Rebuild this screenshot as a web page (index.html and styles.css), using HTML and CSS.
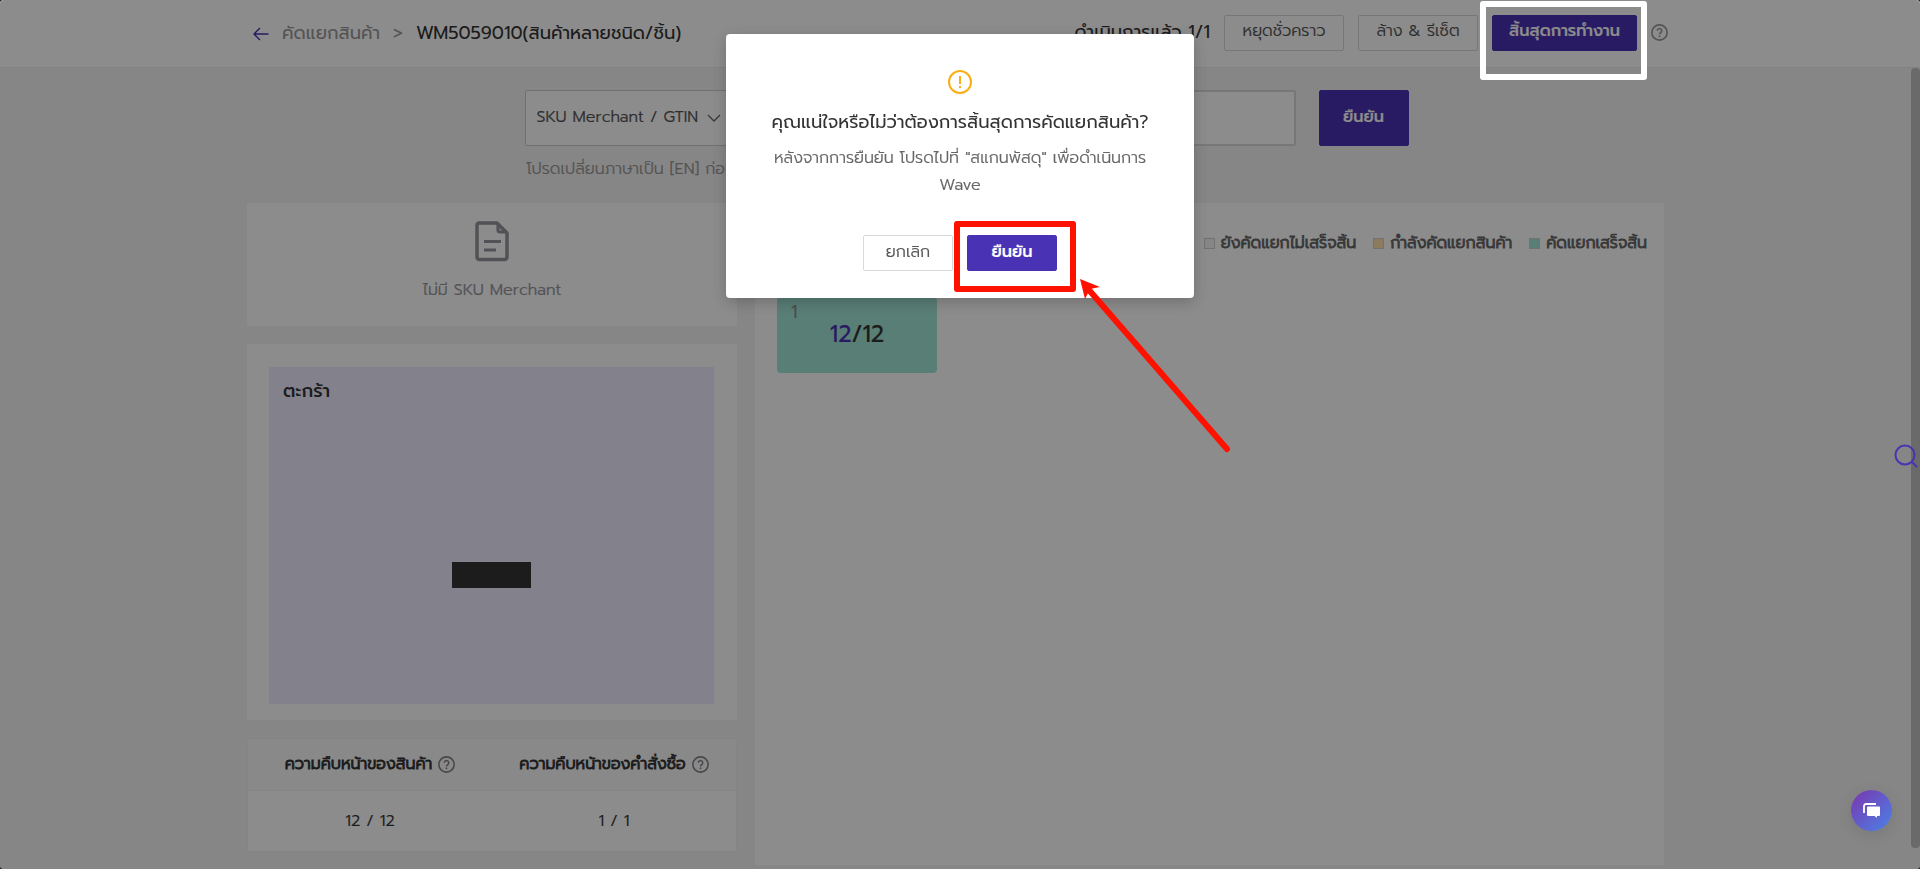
FILE: index.html
```html
<!DOCTYPE html>
<html lang="th">
<head>
  <meta charset="UTF-8">
  <title>คัดแยกสินค้า</title>
  <meta name="viewport" content="width=device-width, initial-scale=1.0">
  <link rel="stylesheet" href="styles.css">
</head>
<body>
  <svg class="defs" width="0" height="0" aria-hidden="true">
    <symbol id="icon-help" viewBox="0 0 16 16">
      <circle cx="8" cy="8" r="7.2" fill="none" stroke="currentColor" stroke-width="1.5"/>
      <path d="M5.9 6.4a2.1 2.1 0 1 1 3.2 1.8c-.7.4-1.1.8-1.1 1.5" fill="none" stroke="currentColor" stroke-width="1.5"/>
      <circle cx="8" cy="11.6" r=".9" fill="currentColor"/>
    </symbol>
  </svg>

  <div class="app">
    <header class="header">
      <div class="header-inner">
        <nav class="breadcrumb">
          <a href="#" class="back" aria-label="กลับ">
            <svg width="16" height="14" viewBox="0 0 16 14"><path d="M15.5 7H1M7 1L1 7l6 6" fill="none" stroke="currentColor" stroke-width="1.4"/></svg>
          </a>
          <a href="#" class="crumb">คัดแยกสินค้า</a>
          <span class="crumb">&gt;</span>
          <h1 class="page-title">WM5059010(สินค้าหลายชนิด/ชิ้น)</h1>
        </nav>
        <div class="actions">
          <span class="done">ดำเนินการแล้ว 1/1</span>
          <button class="btn btn-wide">หยุดชั่วคราว</button>
          <button class="btn btn-wide">ล้าง &amp; รีเซ็ต</button>
          <div class="marked">
            <button class="btn btn-primary btn-end">สิ้นสุดการทำงาน</button>
            <span class="mark mark-white"></span>
          </div>
          <svg class="help" width="17" height="17"><use href="#icon-help"/></svg>
        </div>
      </div>
    </header>

    <main class="main">
      <form class="scan">
        <div class="scan-row">
          <div class="select-wrap">
            <select class="scan-type" aria-label="ประเภท">
              <option>SKU Merchant / GTIN</option>
            </select>
            <svg class="chevron" width="14" height="8" viewBox="0 0 14 8"><path d="M1 1l6 6 6-6" fill="none" stroke="currentColor" stroke-width="1.3"/></svg>
          </div>
          <input class="scan-input" id="scan-code" type="text">
          <button type="button" class="btn btn-primary btn-scan">ยืนยัน</button>
        </div>
        <label class="hint" for="scan-code">โปรดเปลี่ยนภาษาเป็น [EN] ก่อน</label>
      </form>

      <div class="columns">
        <div class="left">
          <section class="card empty">
            <svg width="36" height="42" viewBox="0 0 36 42">
              <path d="M5 3h18l10 10v24a2.500 2.500 0 0 1-2.500 2.500h-25A2.500 2.500 0 0 1 3 37V5.500A2.500 2.500 0 0 1 5 3z" fill="none" stroke="currentColor" stroke-width="3.500" stroke-linejoin="round"/>
              <path d="M24 3v7a2 2 0 0 0 2 2h7M10 21.500h17M10 30h12" fill="none" stroke="currentColor" stroke-width="3.200"/>
            </svg>
            <p>ไม่มี SKU Merchant</p>
          </section>

          <section class="card basket-card">
            <div class="basket">
              <h2>ตะกร้า</h2>
              <div class="basket-body"><span class="basket-code"></span></div>
            </div>
          </section>

          <table class="progress">
            <thead>
              <tr>
                <th><span class="th-inner">ความคืบหน้าของสินค้า <svg width="17" height="17"><use href="#icon-help"/></svg></span></th>
                <th><span class="th-inner">ความคืบหน้าของคำสั่งซื้อ <svg width="17" height="17"><use href="#icon-help"/></svg></span></th>
              </tr>
            </thead>
            <tbody>
              <tr>
                <td>12 / 12</td>
                <td>1 / 1</td>
              </tr>
            </tbody>
          </table>
        </div>

        <section class="card right">
          <ul class="legend">
            <li><i class="dot"></i>ยังคัดแยกไม่เสร็จสิ้น</li>
            <li><i class="dot dot-doing"></i>กำลังคัดแยกสินค้า</li>
            <li><i class="dot dot-done"></i>คัดแยกเสร็จสิ้น</li>
          </ul>
          <div class="slots">
            <div class="slot">
              <span class="slot-no">1</span>
              <div class="slot-count"><span class="picked">12</span>/12</div>
            </div>
          </div>
        </section>
      </div>
    </main>

    <div class="scrollbar"></div>
    <div class="mask"></div>
  </div>

  <div class="modal" role="dialog" aria-labelledby="modal-title">
    <svg class="modal-icon" width="24" height="24" viewBox="0 0 24 24">
      <circle cx="12" cy="12" r="11" fill="none" stroke="currentColor" stroke-width="2"/>
      <path d="M12 6v8" stroke="currentColor" stroke-width="2"/>
      <circle cx="12" cy="17" r="1.200" fill="currentColor"/>
    </svg>
    <h2 id="modal-title">คุณแน่ใจหรือไม่ว่าต้องการสิ้นสุดการคัดแยกสินค้า?</h2>
    <p>หลังจากการยืนยัน โปรดไปที่ "สแกนพัสดุ" เพื่อดำเนินการ<br>Wave</p>
    <div class="modal-footer">
      <button class="btn">ยกเลิก</button>
      <div class="marked">
        <button class="btn btn-primary">ยืนยัน</button>
        <span class="mark mark-red"></span>
        <svg class="arrow" width="152" height="174" viewBox="0 0 152 174">
          <path d="M9 11L147 170" stroke="currentColor" stroke-width="6" stroke-linecap="round"/>
          <path d="M0 0l20 8-10 2-5 10z" fill="currentColor"/>
        </svg>
      </div>
    </div>
  </div>

  <button class="search-tab" aria-label="ค้นหา">
    <svg width="24" height="24" viewBox="0 0 24 24"><path d="M18 18l5 5" stroke="currentColor" stroke-width="2"/><circle cx="11" cy="11" r="9.500" fill="none" stroke="currentColor" stroke-width="2"/></svg>
  </button>

  <button class="chat" aria-label="แชท">
    <svg width="18" height="16" viewBox="0 0 18 16">
      <path d="M1 10V3a2 2 0 0 1 2-2h10" fill="none" stroke="#fff" stroke-width="1.800"/>
      <path d="M5 3.500h11a1 1 0 0 1 1 1v7.500a1 1 0 0 1-1 1h-2v2l-2.500-2H5a1 1 0 0 1-1-1V4.500a1 1 0 0 1 1-1z" fill="#fff"/>
    </svg>
  </button>
</body>
</html>
```

FILE: styles.css
```css
* {
  box-sizing: border-box;
}

body {
  margin: 0;
  background: #222;
  color: #333;
  font-family: Prompt, "Noto Sans Thai", "Noto Sans", sans-serif;
  font-size: 16px;
  font-weight: 300;
  line-height: 27px;
  -webkit-text-stroke: 0.2px;
}

h1, h2, p, ul {
  margin: 0;
  padding: 0;
}

h1, h2 {
  font-weight: 400;
  -webkit-text-stroke: 0;
}

a {
  text-decoration: none;
}

button, input, select {
  font: inherit;
}

.defs {
  position: absolute;
}

.app {
  position: relative;
  display: flex;
  flex-direction: column;
  min-height: 100vh;
  background: #f5f5f5;
  border-radius: 4px;
  overflow: hidden;
}

.header {
  background: #fff;
  border-bottom: 1px solid #ebebeb;
}

.header-inner {
  display: flex;
  justify-content: space-between;
  align-items: center;
  max-width: 1416px;
  height: 67px;
  margin: 0 auto;
  padding-left: 1px;
}

.breadcrumb {
  display: flex;
  align-items: center;
  gap: 13px;
  font-size: 18px;
  font-weight: 400;
  -webkit-text-stroke: 0;
}

.back {
  display: flex;
  color: #4a32b4;
}

.crumb {
  color: #999;
}

.page-title {
  font-size: 18px;
}

.actions {
  display: flex;
  align-items: center;
  gap: 14px;
  padding-bottom: 2px;
}

.done {
  font-size: 18px;
  font-weight: 400;
  -webkit-text-stroke: 0;
}

.help {
  color: #999;
}

.btn {
  display: block;
  min-width: 90px;
  height: 36px;
  padding: 0 12px 2px;
  color: #555;
  background: #fff;
  border: 1px solid #d9d9d9;
  border-radius: 2px;
  white-space: nowrap;
  cursor: pointer;
}

.btn-wide {
  width: 120px;
}

.btn-primary {
  color: #fff;
  background: #4a32b4;
  border-color: #4a32b4;
  font-weight: 500;
}

.btn-end {
  width: 145px;
}

.marked {
  position: relative;
}

.mark {
  position: absolute;
  z-index: 20;
  border: 6px solid #fff;
  border-radius: 3px;
  pointer-events: none;
}

.mark-white {
  inset: -14px -10px -29px -12px;
}

.mark-red {
  inset: -14px -19px -21px -13px;
  border-color: #ff1100;
}

.main {
  flex: 1;
  display: flex;
  flex-direction: column;
  width: calc(100% - 9px);
  max-width: 1426px;
  margin-right: auto;
  margin-left: auto;
  padding: 22px 9px 4px 0;
}

.scan {
  width: 100%;
  max-width: 906px;
  margin: 0 auto;
  padding-left: 22px;
  height: 113px;
}

.scan-row {
  display: flex;
  height: 56px;
}

.select-wrap {
  position: relative;
  width: 206px;
}

.scan-type {
  appearance: none;
  width: 100%;
  height: 100%;
  padding: 0 10px 2px 11px;
  color: #555;
  background: #fff;
  border: 1px solid #ccc;
  border-radius: 2px 0 0 2px;
}

.chevron {
  position: absolute;
  top: 24px;
  right: 10px;
  color: #666;
}

.scan-input {
  flex: 1;
  min-width: 0;
  padding: 0 12px;
  background: #fff;
  border: 2px solid #d9d9d9;
  border-radius: 0 2px 2px 0;
}

.btn-scan {
  height: 56px;
  margin-left: 23px;
}

.hint {
  display: block;
  margin-top: 10px;
  padding-left: 2px;
  color: #999;
}

.columns {
  flex: 1;
  display: flex;
  gap: 18px;
}

.left {
  display: flex;
  flex-direction: column;
  gap: 18px;
  width: 490px;
}

.card {
  background: #fff;
}

.empty {
  display: flex;
  flex-direction: column;
  align-items: center;
  gap: 15px;
  height: 123px;
  padding-top: 17px;
  color: #95959d;
}

.basket-card {
  height: 376px;
  padding: 23px 23px 16px 22px;
}

.basket {
  display: flex;
  flex-direction: column;
  height: 100%;
  padding: 11px 14px;
  background: #efecff;
}

.basket h2 {
  font-size: 18px;
  font-weight: 500;
}

.basket-body {
  flex: 1;
  display: flex;
  justify-content: center;
  align-items: center;
  padding-top: 52px;
}

.basket-code {
  width: 79px;
  height: 26px;
  background: #333;
}

.progress {
  width: 100%;
  border: 1px solid #f0f0f0;
  border-spacing: 0;
  table-layout: fixed;
  background: #fff;
  text-align: center;
}

.progress th {
  height: 52px;
  padding: 0;
  background: #fafafa;
  border-bottom: 1px solid #f0f0f0;
  font-weight: 300;
  -webkit-text-stroke: 0.9px;
}

.progress td {
  height: 60px;
  padding: 0;
}

.th-inner {
  display: flex;
  justify-content: center;
  align-items: center;
  gap: 6px;
}

.th-inner svg {
  color: #85858d;
}

.right {
  flex: 1;
  padding: 27px 17px 0 22px;
}

.legend {
  display: flex;
  justify-content: flex-end;
  gap: 17px;
  list-style: none;
  color: #666;
  -webkit-text-stroke: 0.9px;
}

.legend li {
  display: flex;
  align-items: center;
  gap: 6px;
}

.dot {
  width: 11px;
  height: 11px;
  background: #f5f5f5;
  border: 1px solid #d0d0d0;
}

.dot-doing {
  background: #ffe0a8;
}

.dot-done {
  background: #a0e5d5;
}

.slots {
  display: flex;
  padding-top: 40px;
}

.slot {
  width: 160px;
  height: 76px;
  padding: 2px 14px;
  background: #a3e5d6;
  border-radius: 4px;
}

.slot-no {
  display: block;
  color: #888;
  font-size: 18px;
}

.slot-count {
  text-align: center;
  font-size: 23px;
  font-weight: 400;
  line-height: 18px;
}

.picked {
  color: #4a32b4;
}

.scrollbar {
  position: absolute;
  top: 68px;
  right: 0;
  bottom: 21px;
  width: 9px;
  background: #c1c1c1;
  border-radius: 4px;
}

.mask {
  position: absolute;
  inset: 0;
  z-index: 10;
  background: rgba(0, 0, 0, 0.45);
}

.modal {
  position: fixed;
  top: 34px;
  left: 0;
  right: 0;
  z-index: 30;
  width: 468px;
  margin: 0 auto;
  padding: 36px 24px 27px;
  background: #fff;
  border-radius: 4px;
  box-shadow: 0 4px 14px rgba(0, 0, 0, 0.2);
  text-align: center;
}

.modal-icon {
  display: block;
  margin: 0 auto 15px;
  color: #faad14;
}

.modal h2 {
  margin-bottom: 9px;
  font-size: 18px;
  white-space: nowrap;
}

.modal p {
  color: #666;
  white-space: nowrap;
}

.modal-footer {
  display: flex;
  justify-content: center;
  gap: 14px;
  padding-top: 36px;
}

.arrow {
  position: absolute;
  top: 44px;
  left: 113px;
  z-index: 20;
  color: #ff1100;
}

.search-tab, .chat {
  position: fixed;
  z-index: 30;
  padding: 0;
  border: none;
  cursor: pointer;
}

.search-tab {
  top: 444px;
  right: 2px;
  height: 24px;
  background: none;
  color: #4a32b4;
}

.chat {
  right: 28px;
  bottom: 38px;
  display: flex;
  justify-content: center;
  align-items: center;
  width: 41px;
  height: 41px;
  border-radius: 50%;
  background: linear-gradient(135deg, #7b36ae, #4a82e8);
  box-shadow: 0 4px 16px rgba(0, 0, 0, 0.1);
}
```
